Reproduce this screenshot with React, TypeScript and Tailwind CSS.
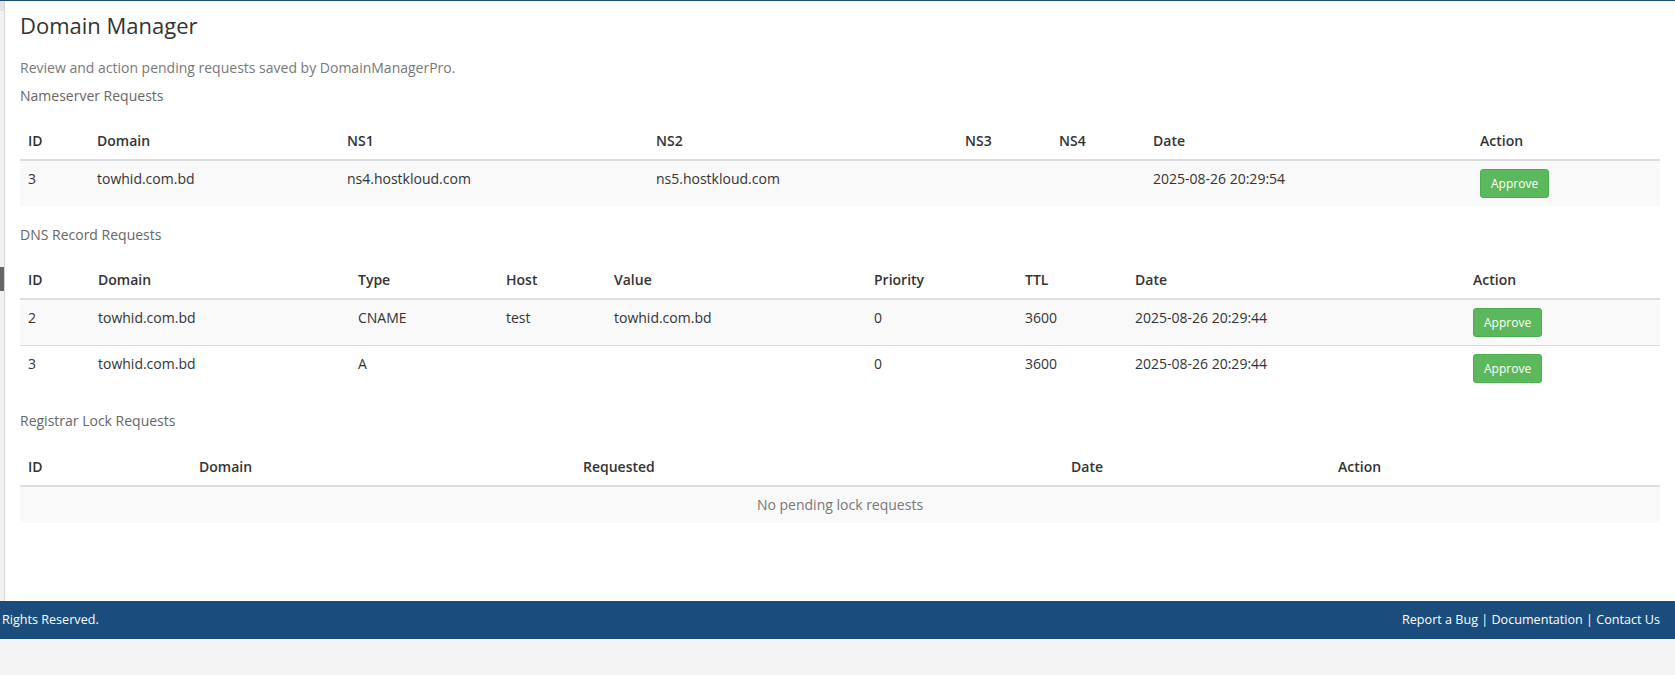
// App.tsx
const font = "font-['Open_Sans','Liberation_Sans',sans-serif]";

type Col = { label: string; w: string };

const nsCols: Col[] = [
    { label: "ID", w: "w-[69px]" },
    { label: "Domain", w: "w-[250px]" },
    { label: "NS1", w: "w-[309px]" },
    { label: "NS2", w: "w-[309px]" },
    { label: "NS3", w: "w-[94px]" },
    { label: "NS4", w: "w-[94px]" },
    { label: "Date", w: "w-[327px]" },
    { label: "Action", w: "w-[188px]" },
];

const dnsCols: Col[] = [
    { label: "ID", w: "w-[70px]" },
    { label: "Domain", w: "w-[260px]" },
    { label: "Type", w: "w-[148px]" },
    { label: "Host", w: "w-[108px]" },
    { label: "Value", w: "w-[260px]" },
    { label: "Priority", w: "w-[151px]" },
    { label: "TTL", w: "w-[110px]" },
    { label: "Date", w: "w-[338px]" },
    { label: "Action", w: "w-[195px]" },
];

const lockCols: Col[] = [
    { label: "ID", w: "w-[171px]" },
    { label: "Domain", w: "w-[384px]" },
    { label: "Requested", w: "w-[488px]" },
    { label: "Date", w: "w-[267px]" },
    { label: "Action", w: "w-[330px]" },
];

const nsRows = [
    ["3", "towhid.com.bd", "ns4.hostkloud.com", "ns5.hostkloud.com", "", "", "2025-08-26 20:29:54"],
];

const dnsRows = [
    ["2", "towhid.com.bd", "CNAME", "test", "towhid.com.bd", "0", "3600", "2025-08-26 20:29:44"],
    ["3", "towhid.com.bd", "A", "", "", "0", "3600", "2025-08-26 20:29:44"],
];

function ApproveButton() {
    return (
        <button className="h-[29px] rounded-[3px] border border-[#4cae4c] bg-[#5cb85c] px-[10px] text-[12px] leading-[17px] text-white">
            Approve
        </button>
    );
}

function DataTable({ cols, rows }: { cols: Col[]; rows: string[][] }) {
    return (
        <table className="w-full table-fixed border-collapse text-[14px] leading-[20px] text-[#333]">
            <colgroup>
                {cols.map((c) => (
                    <col key={c.label} className={c.w} />
                ))}
            </colgroup>
            <thead>
                <tr>
                    {cols.map((c) => (
                        <th key={c.label} className="border-b-2 border-[#ddd] p-2 text-left font-semibold">
                            {c.label}
                        </th>
                    ))}
                </tr>
            </thead>
            <tbody>
                {rows.map((r, i) => (
                    <tr key={i} className={i % 2 === 0 ? "bg-[#f9f9f9]" : "bg-white"}>
                        {r.map((cell, j) => (
                            <td key={j} className="border-t border-[#ddd] p-2 align-top">
                                {cell}
                            </td>
                        ))}
                        <td className="border-t border-[#ddd] p-2 align-top">
                            <ApproveButton />
                        </td>
                    </tr>
                ))}
            </tbody>
        </table>
    );
}

function SectionLabel({ children, className }: { children: string; className: string }) {
    return <div className={`text-[14px] leading-[20px] text-[#666] ${className}`}>{children}</div>;
}

export default function App() {
    return (
        <div className={`h-[675px] bg-[#f4f4f4] ${font}`}>
            <div className="flex h-[601px] border-t border-[#1a4d7c] bg-white">
                {/* collapsed sidebar edge */}
                <aside className="flex w-[5px] flex-col border-r border-[#d4d4d4] bg-[#f2f2f2]">
                    <div className="h-[10px] bg-[#e4e4e4]" />
                    <div className="mt-[256px] h-[24px] bg-[#666]" />
                </aside>

                <main className="flex-1 px-[15px] pt-[12px]">
                    <h1 className="text-[22px] leading-[24px] text-[#333]">Domain Manager</h1>
                    <p className="mt-[21px] text-[14px] leading-[20px] text-[#777]">
                        Review and action pending requests saved by DomainManagerPro.
                    </p>

                    <SectionLabel className="mt-[8px]">Nameserver Requests</SectionLabel>
                    <div className="mt-[17px]">
                        <DataTable cols={nsCols} rows={nsRows} />
                    </div>

                    <SectionLabel className="mt-[19px]">DNS Record Requests</SectionLabel>
                    <div className="mt-[17px]">
                        <DataTable cols={dnsCols} rows={dnsRows} />
                    </div>

                    <SectionLabel className="mt-[20px]">Registrar Lock Requests</SectionLabel>
                    <table className="mt-[18px] w-full table-fixed border-collapse text-[14px] leading-[20px] text-[#333]">
                        <colgroup>
                            {lockCols.map((c) => (
                                <col key={c.label} className={c.w} />
                            ))}
                        </colgroup>
                        <thead>
                            <tr>
                                {lockCols.map((c) => (
                                    <th key={c.label} className="border-b-2 border-[#ddd] p-2 text-left font-semibold">
                                        {c.label}
                                    </th>
                                ))}
                            </tr>
                        </thead>
                        <tbody>
                            <tr className="bg-[#f9f9f9]">
                                <td colSpan={5} className="border-t border-[#ddd] p-2 text-center text-[#777]">
                                    No pending lock requests
                                </td>
                            </tr>
                        </tbody>
                    </table>
                </main>
            </div>

            <footer className="flex h-[38px] items-center justify-between bg-[#1a4d7c] pl-[2px] pr-[15px] text-[12.6px] text-white">
                <span>Rights Reserved.</span>
                <span>Report a Bug | Documentation | Contact Us</span>
            </footer>
        </div>
    );
}
